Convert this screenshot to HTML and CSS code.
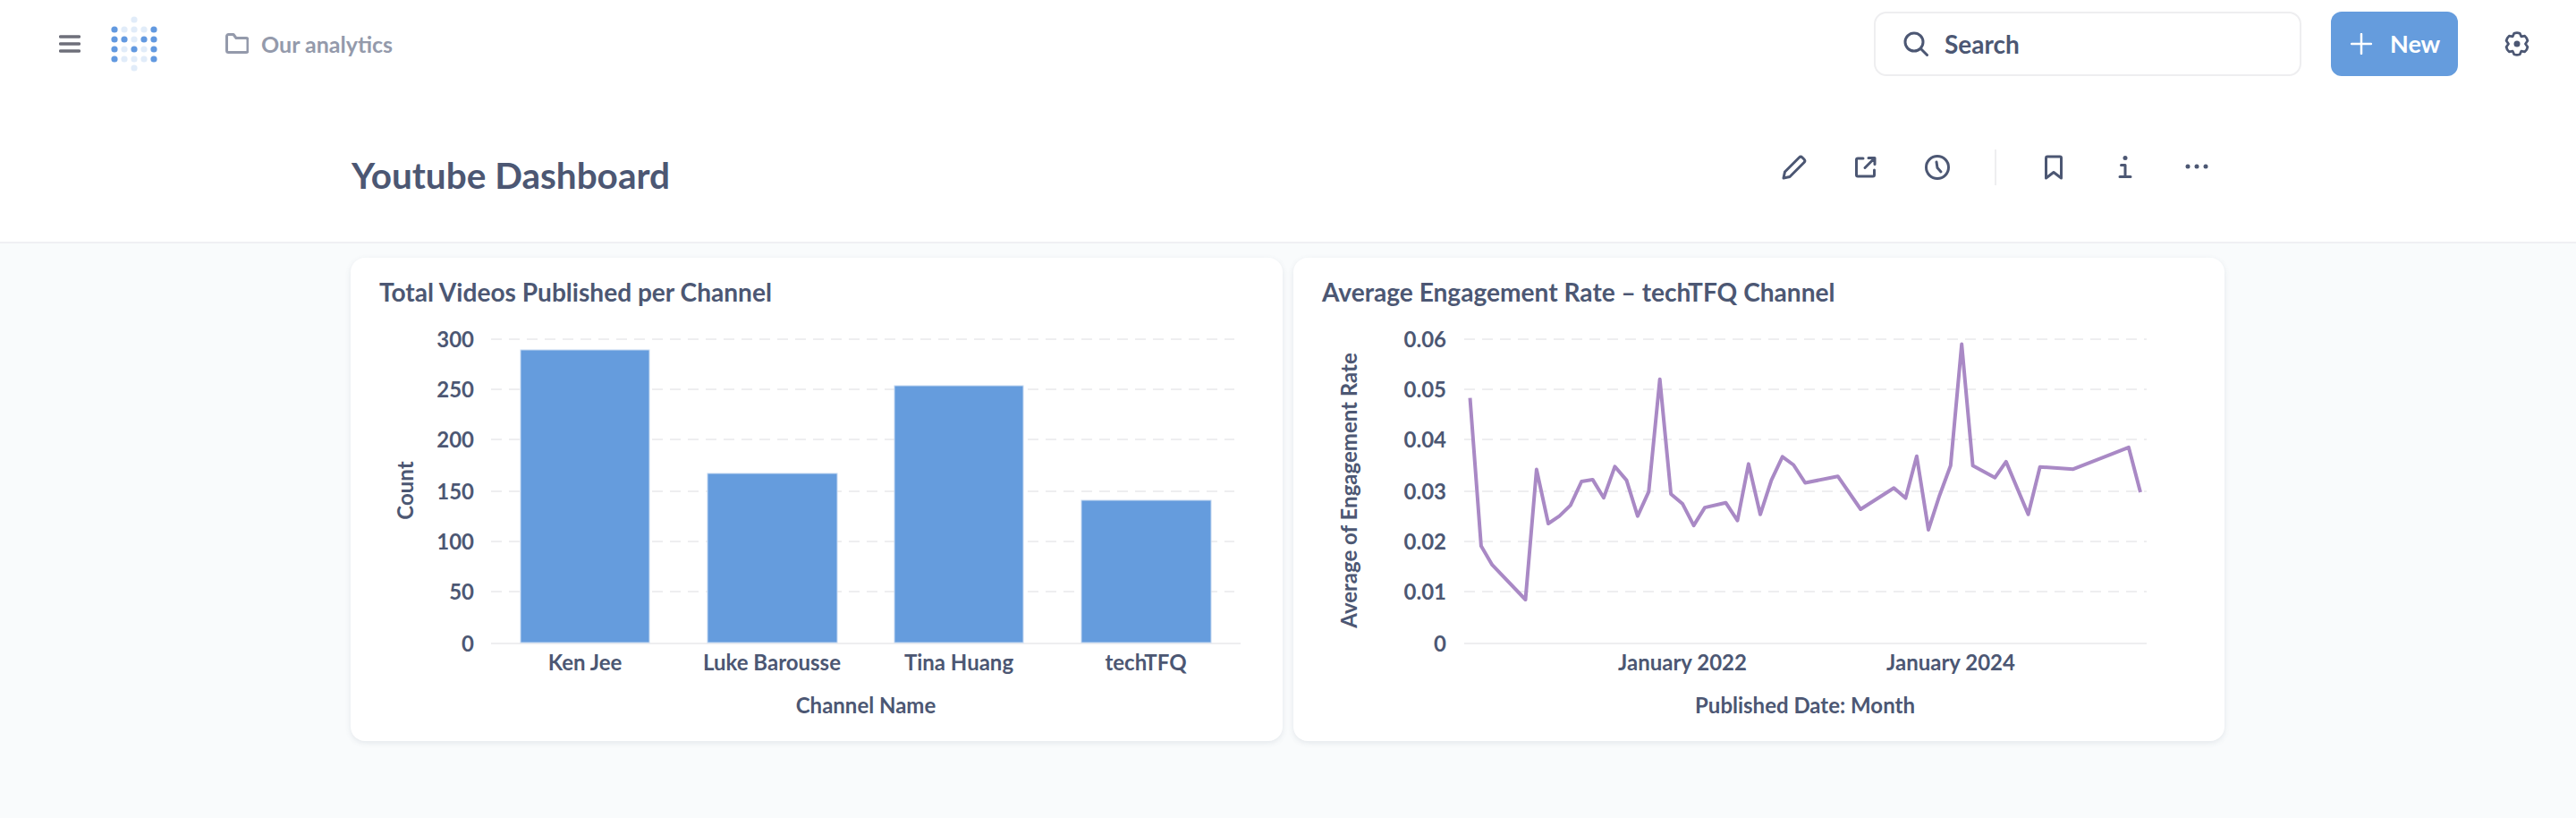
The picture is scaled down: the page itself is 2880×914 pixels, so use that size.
FILE: index.html
```html
<!DOCTYPE html>
<html lang="en">

<head>
    <meta charset="UTF-8">
    <title>Youtube Dashboard</title>
    <link rel="stylesheet" href="styles.css">
</head>

<body>
    <nav class="topbar">
        <svg class="menu-icon" viewBox="0 0 24 20"><path d="M1.5 2h21M1.5 10h21M1.5 18h21" /></svg>
        <svg class="logo" viewBox="0 0 52 62">
            <g class="dot-light">
                <circle cx="26" cy="4" r="3.6" /><circle cx="26" cy="58" r="3.6" />
                <circle cx="15" cy="15" r="3.6" /><circle cx="26" cy="15" r="3.6" /><circle cx="37" cy="15" r="3.6" />
                <circle cx="26" cy="26" r="3.6" />
                <circle cx="15" cy="37" r="3.6" /><circle cx="37" cy="37" r="3.6" />
                <circle cx="15" cy="48" r="3.6" /><circle cx="26" cy="48" r="3.6" /><circle cx="37" cy="48" r="3.6" />
            </g>
            <g class="dot-dark">
                <circle cx="4" cy="15" r="3.6" /><circle cx="48" cy="15" r="3.6" />
                <circle cx="4" cy="26" r="3.6" /><circle cx="15" cy="26" r="3.6" /><circle cx="37" cy="26" r="3.6" /><circle cx="48" cy="26" r="3.6" />
                <circle cx="4" cy="37" r="3.6" /><circle cx="26" cy="37" r="3.6" /><circle cx="48" cy="37" r="3.6" />
                <circle cx="4" cy="48" r="3.6" /><circle cx="48" cy="48" r="3.6" />
            </g>
        </svg>
        <a class="crumb">
            <svg class="folder-icon" viewBox="0 0 26 23"><path d="M1.5 19.5v-16a2 2 0 0 1 2-2h5.5l3 4h11a2 2 0 0 1 2 2v12a2 2 0 0 1-2 2h-19.500a2 2 0 0 1-2-2z" /></svg>
            Our analytics
        </a>
        <div class="search">
            <svg class="icon search-icon" viewBox="0 0 28 28"><circle cx="12" cy="12" r="10" /><path d="M19.500 19.500l7 7" /></svg>
            Search
        </div>
        <button class="new-btn">
            <svg class="plus-icon" viewBox="0 0 24 24"><path d="M12 1v22M1 12h22" /></svg>
            New
        </button>
        <svg class="icon gear-icon" viewBox="0 0 28 28">
            <path d="M10.800 2.200Q14 1 17.200 2.200L18.800 5.800 22.800 5.200Q25.400 7.400 25.900 10.500L23.500 14 25.900 17.500Q25.400 20.600 22.800 22.800L18.800 22.200 17.200 25.800Q14 27 10.800 25.800L9.200 22.200 5.200 22.800Q2.600 20.600 2.100 17.500L4.500 14 2.100 10.500Q2.600 7.400 5.200 5.200L9.200 5.800z" />
            <circle class="gear-hub" cx="14" cy="14" r="3.500" />
        </svg>
    </nav>

    <header class="dash-header">
        <h1>Youtube Dashboard</h1>
        <div class="actions">
            <button class="action"><svg class="icon" viewBox="0 0 28 28"><path d="M2 26l1.500-7L19.500 3a2.500 2.500 0 0 1 3.500 0l2 2a2.500 2.500 0 0 1 0 3.500L9 24.500z" /></svg></button>
            <button class="action"><svg class="icon" viewBox="0 0 28 28"><path d="M11 4H5a1.500 1.500 0 0 0-1.500 1.500v17A1.500 1.500 0 0 0 5 24h17a1.500 1.500 0 0 0 1.500-1.500V17M17 3.500h7v7M24 3.500L13 14.500" /></svg></button>
            <button class="action"><svg class="icon" viewBox="0 0 28 28"><circle cx="14" cy="14" r="12.500" /><path d="M13 8l1 6.500 4 4.500" /></svg></button>
            <span class="divider"></span>
            <button class="action"><svg class="icon" viewBox="0 0 28 28"><path d="M5.500 26V3.500A1.500 1.500 0 0 1 7 2h14a1.500 1.500 0 0 1 1.500 1.500V26L14 19.500z" /></svg></button>
            <button class="action"><svg class="icon" viewBox="0 0 28 28"><circle class="fill" cx="14" cy="3.500" r="2.500" /><path d="M9.500 11.500H14V24M8 24.500h12" /></svg></button>
            <button class="action"><svg class="icon" viewBox="0 0 28 28"><circle class="fill" cx="4" cy="13" r="2.500" /><circle class="fill" cx="14" cy="13" r="2.500" /><circle class="fill" cx="24" cy="13" r="2.500" /></svg></button>
        </div>
    </header>

    <main class="grid">
        <section class="card">
            <h2>Total Videos Published per Channel</h2>
            <svg class="chart" viewBox="392 368 1042 460">
                <g class="gridlines">
                    <line x1="549" x2="1380" y1="379" y2="379" />
                    <line x1="549" x2="1380" y1="435" y2="435" />
                    <line x1="549" x2="1380" y1="491" y2="491" />
                    <line x1="549" x2="1380" y1="549" y2="549" />
                    <line x1="549" x2="1380" y1="605" y2="605" />
                    <line x1="549" x2="1380" y1="661" y2="661" />
                </g>
                <line class="axis" x1="549" x2="1387" y1="719" y2="719" />
                <g class="bars">
                    <rect x="582" y="391" width="144" height="327" />
                    <rect x="791" y="529" width="145" height="189" />
                    <rect x="1000" y="431" width="144" height="287" />
                    <rect x="1209" y="559" width="145" height="159" />
                </g>
                <g class="ticks ticks-y">
                    <text x="530" y="388">300</text>
                    <text x="530" y="444">250</text>
                    <text x="530" y="500">200</text>
                    <text x="530" y="558">150</text>
                    <text x="530" y="614">100</text>
                    <text x="530" y="670">50</text>
                    <text x="530" y="728">0</text>
                </g>
                <g class="ticks ticks-x">
                    <text x="654" y="749">Ken Jee</text>
                    <text x="863" y="749">Luke Barousse</text>
                    <text x="1072" y="749">Tina Huang</text>
                    <text x="1281" y="749">techTFQ</text>
                </g>
                <text class="ticks ticks-x" x="968" y="797">Channel Name</text>
                <text class="ticks ticks-x" transform="translate(462 548) rotate(-90)">Count</text>
            </svg>
        </section>

        <section class="card">
            <h2>Average Engagement Rate – techTFQ Channel</h2>
            <svg class="chart" viewBox="1446 368 1042 460">
                <g class="gridlines">
                    <line x1="1637" x2="2400" y1="379" y2="379" />
                    <line x1="1637" x2="2400" y1="435" y2="435" />
                    <line x1="1637" x2="2400" y1="491" y2="491" />
                    <line x1="1637" x2="2400" y1="549" y2="549" />
                    <line x1="1637" x2="2400" y1="605" y2="605" />
                    <line x1="1637" x2="2400" y1="661" y2="661" />
                </g>
                <line class="axis" x1="1637" x2="2400" y1="719" y2="719" />
                <polyline class="trend" points="1643.500,444.600 1655.900,610 1668.300,631.200 1705.500,670 1717.900,524.600 1731,585 1743.400,576.600 1755.800,564.600 1768.200,538 1780.600,535.900 1793,556.200 1805.400,521.300 1818.500,536.600 1830.900,576.600 1843.300,549.300 1855.700,423.800 1868.100,551.900 1881.200,563.100 1893.600,587.100 1906,567.100 1929.400,561.700 1942.500,581.700 1954.900,518.400 1968,574.800 1980.400,536.600 1992.800,510.400 2005.200,519.500 2018.200,539.500 2054.700,532.200 2080.200,569 2117.400,545.300 2130.500,556.600 2142.900,509.700 2156,591.900 2168.400,553.700 2180.800,520.200 2193.200,384.600 2205.600,520.200 2230.400,533.700 2242.800,515.900 2267.600,574.800 2280.700,521.700 2317.900,524.200 2379.900,499.900 2393,550" />
                <g class="ticks ticks-y">
                    <text x="1617" y="388">0.06</text>
                    <text x="1617" y="444">0.05</text>
                    <text x="1617" y="500">0.04</text>
                    <text x="1617" y="558">0.03</text>
                    <text x="1617" y="614">0.02</text>
                    <text x="1617" y="670">0.01</text>
                    <text x="1617" y="728">0</text>
                </g>
                <g class="ticks ticks-x">
                    <text x="1881" y="749">January 2022</text>
                    <text x="2181" y="749">January 2024</text>
                </g>
                <text class="ticks ticks-x" x="2018" y="797">Published Date: Month</text>
                <text class="ticks ticks-x" transform="translate(1517 548) rotate(-90)">Average of Engagement Rate</text>
            </svg>
        </section>
    </main>
</body>

</html>
```

FILE: styles.css
```css
* {
    box-sizing: border-box;
}

body {
    display: flex;
    flex-direction: column;
    height: 100vh;
    margin: 0;
    font-family: Lato, "Open Sans", sans-serif;
    font-weight: 700;
    color: #4c5773;
    background-color: #fff;
}

button {
    padding: 0;
    border: 0;
    font: inherit;
}

.icon {
    width: 28px;
    height: 28px;
    fill: none;
    stroke: #4c5773;
    stroke-width: 3;
    stroke-linecap: round;
    stroke-linejoin: round;
}

.icon .fill {
    fill: #4c5773;
    stroke: none;
}

/* top nav */
.topbar {
    display: flex;
    align-items: center;
    height: 98px;
    padding: 0 52px 1px 66px;
}

.menu-icon {
    width: 24px;
    height: 20px;
    fill: none;
    stroke: #6e6f7a;
    stroke-width: 3.500;
    stroke-linecap: round;
}

.logo {
    width: 52px;
    height: 62px;
    margin-left: 34px;
}

.dot-light {
    fill: #e1ecf9;
}

.dot-dark {
    fill: #6299e0;
}

.crumb {
    display: flex;
    align-items: center;
    gap: 14px;
    margin-left: 76px;
    font-size: 25px;
    color: #949aab;
}

.folder-icon {
    width: 26px;
    height: 23px;
    fill: none;
    stroke: #949aab;
    stroke-width: 3;
    stroke-linejoin: round;
}

.search {
    display: flex;
    align-items: center;
    gap: 18px;
    width: 478px;
    height: 72px;
    margin-left: auto;
    padding-left: 31px;
    border: 2px solid #eeeef0;
    border-radius: 14px;
    font-size: 28px;
}

.new-btn {
    display: flex;
    align-items: center;
    gap: 20px;
    width: 142px;
    height: 72px;
    margin-left: 33px;
    padding-left: 22px;
    border-radius: 12px;
    font-size: 27px;
    color: #fff;
    background-color: #659cdd;
}

.plus-icon {
    width: 24px;
    height: 24px;
    fill: none;
    stroke: #fff;
    stroke-width: 2.500;
    stroke-linecap: round;
}

.gear-icon {
    margin-left: 52px;
    stroke-width: 2.800;
}

.gear-hub {
    fill: #4c5773;
    stroke: none;
}

/* dashboard title row */
.dash-header {
    display: flex;
    justify-content: space-between;
    align-items: center;
    height: 174px;
    padding: 6px 408px 0 393px;
    border-bottom: 2px solid #f0f0f3;
}

.dash-header h1 {
    margin: 17px 0 0;
    font-size: 40.500px;
    font-weight: 700;
}

.actions {
    display: flex;
    align-items: center;
    gap: 48px;
}

.action {
    display: flex;
    justify-content: center;
    width: 32px;
    background: none;
}

.divider {
    width: 2px;
    height: 40px;
    background-color: #eeeef0;
}

/* cards */
.grid {
    flex: 1;
    display: grid;
    grid-template-columns: 1042px 1041px;
    align-items: start;
    gap: 12px;
    padding: 16px 0 0 392px;
    background-color: #f9fbfc;
}

.card {
    height: 540px;
    border-radius: 16px;
    background-color: #fff;
    box-shadow: 0 2px 6px rgba(76, 87, 115, 0.12);
}

.card h2 {
    height: 80px;
    margin: 0;
    padding: 21px 32px 0;
    font-size: 28.100px;
    font-weight: 700;
}

.chart {
    display: block;
    width: 1042px;
    height: 460px;
}

.gridlines line {
    stroke: #eeeef0;
    stroke-width: 2;
    stroke-dasharray: 12 8;
}

.axis {
    stroke: #eeeef0;
    stroke-width: 2;
}

.bars rect {
    fill: #659cdd;
    stroke: #c4d8f1;
    stroke-width: 1;
}

.trend {
    fill: none;
    stroke: #a989c5;
    stroke-width: 4;
    stroke-linejoin: round;
}

.ticks {
    font-size: 24px;
    font-weight: 700;
    fill: #4c5773;
}

.ticks-y {
    text-anchor: end;
}

.ticks-x {
    text-anchor: middle;
}
```
